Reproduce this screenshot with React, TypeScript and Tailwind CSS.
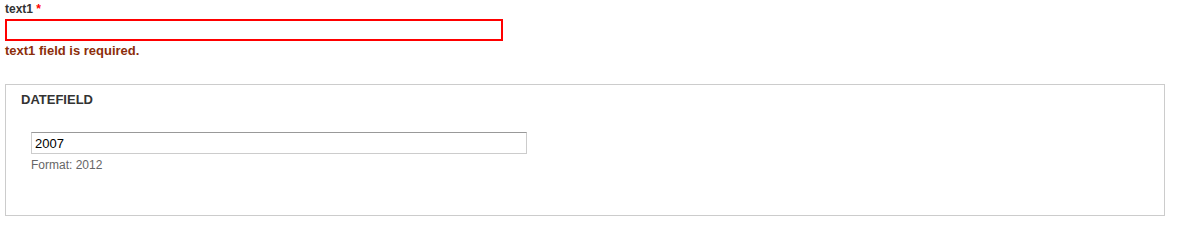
export default function App() {
  return (
    <div className="w-[1178px] h-[225px] bg-white px-[5px] pt-[1px] font-['Liberation_Sans',Arial,sans-serif] text-[#333]">
      {/* text1 field with error */}
      <div>
        <label className="block text-[12px] leading-[16px] font-bold text-[#333]">
          text1 <span className="text-[#f00]">*</span>
        </label>
        <input
          type="text"
          className="mt-[2px] block w-[498px] h-[22px] border-2 border-[#f00] bg-white px-[3px] text-[13px] outline-none"
        />
        <div className="mt-[2px] text-[13px] leading-[16px] font-bold text-[#8c2e0b]">
          text1 field is required.
        </div>
      </div>

      {/* Datefield fieldset */}
      <div className="mt-[25px] w-[1160px] h-[132px] border border-[#cccccc] pt-[7px] pl-[15px]">
        <div className="text-[13px] leading-[16px] font-bold uppercase text-[#333]">Datefield</div>
        <div className="mt-[24px] pl-[10px]">
          <input
            type="text"
            defaultValue="2007"
            className="block w-[496px] h-[22px] border border-[#ccc] border-t-[#999] bg-white px-[3px] text-[13px] text-black outline-none"
          />
          <div className="mt-[4px] text-[12px] leading-[15px] text-[#666]">Format: 2012</div>
        </div>
      </div>
    </div>
  );
}
